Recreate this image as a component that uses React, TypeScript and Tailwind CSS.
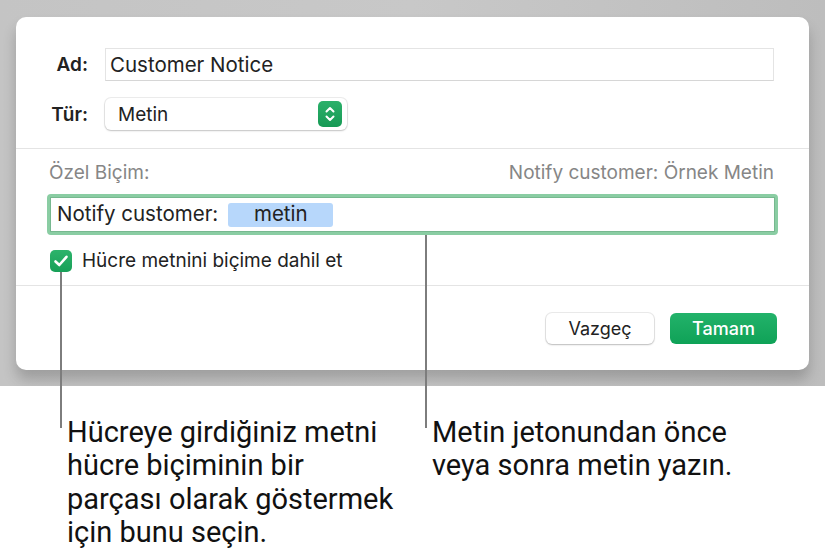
import React from "react";

function Chevrons() {
  return (
    <svg width="12" height="18" viewBox="0 0 12 18" fill="none">
      <path d="M2.5 6.5 L6 3 L9.5 6.5" stroke="white" strokeWidth="2" strokeLinecap="round" strokeLinejoin="round" />
      <path d="M2.5 11.5 L6 15 L9.5 11.5" stroke="white" strokeWidth="2" strokeLinecap="round" strokeLinejoin="round" />
    </svg>
  );
}

function Check() {
  return (
    <svg width="16" height="14" viewBox="0 0 16 14" fill="none">
      <path d="M2.5 7.5 L6.3 11 L13.5 2.8" stroke="white" strokeWidth="2.6" strokeLinecap="round" strokeLinejoin="round" />
    </svg>
  );
}

export default function App() {
  return (
    <div
      className="relative w-[825px] h-[556px] bg-white overflow-hidden text-[#222222]"
      style={{ fontFamily: "Inter, 'Noto Sans', sans-serif" }}
    >
      {/* gray backdrop with dialog */}
      <div className="h-[386px] bg-gradient-to-r from-[#c4c4c4] via-[#c8c8c8] to-[#bdbdbd] pt-[17px] pl-[16px] overflow-hidden">
        <div className="w-[793px] h-[353px] bg-white rounded-[10px] shadow-[0_10px_14px_rgba(0,0,0,0.2)] flex flex-col">
          {/* top section */}
          <div className="pt-[31px] pb-[18px] flex flex-col gap-[17px]">
            <div className="flex items-center">
              <div className="w-[72px] text-right text-[19px] font-semibold pt-[2px]">Ad:</div>
              <div className="ml-[17px] w-[669px] h-[33px] border border-[#e4e4e4] border-b-[#d6d6d6] flex items-center pl-[4px] pt-[2px] text-[20.5px]">
                Customer Notice
              </div>
            </div>
            <div className="flex items-center">
              <div className="w-[72px] text-right text-[19px] font-semibold pt-[3px]">Tür:</div>
              <div className="ml-[17px] w-[242px] h-[32px] rounded-[6px] bg-white shadow-[0_0_0_1px_rgba(0,0,0,0.07),0_1px_2px_rgba(0,0,0,0.18)] flex items-center justify-between pl-[13px] pr-[5px]">
                <span className="text-[19px] pt-[2px]">Metin</span>
                <div className="w-[24px] h-[26px] rounded-[5px] bg-gradient-to-b from-[#2bb06a] to-[#169a55] flex items-center justify-center">
                  <Chevrons />
                </div>
              </div>
            </div>
          </div>
          <div className="h-px bg-[#e4e4e4]" />

          {/* middle section */}
          <div className="px-[31px] pt-[14px] pb-[13px] flex flex-col">
            <div className="flex justify-between items-center pl-[2px] pr-[4px] text-[19px] text-[#868686] leading-[20px]">
              <span>Özel Biçim:</span>
              <span>Notify customer: Örnek Metin</span>
            </div>
            <div className="mt-[11px] w-[731px] h-[41px] rounded-[4px] border-[3px] border-[#8acda3] flex">
              <div className="flex-1 h-full border border-[#77b88f] flex items-center pl-[6px] text-[20.5px]">
                <span>Notify customer:</span>
                <span className="ml-[10px] w-[105px] h-[24px] rounded-[3px] bg-[#b7d7fb] flex items-center justify-center">
                  metin
                </span>
              </div>
            </div>
            <div className="mt-[15px] flex items-center h-[22px] leading-[22px]">
              <div className="ml-[3px] w-[22px] h-[22px] rounded-[5px] bg-gradient-to-b from-[#2cb36b] to-[#17a058] flex items-center justify-center">
                <Check />
              </div>
              <span className="ml-[10px] text-[19px]">Hücre metnini biçime dahil et</span>
            </div>
          </div>
          <div className="h-px bg-[#e4e4e4]" />

          {/* footer */}
          <div className="flex justify-end gap-[16px] pt-[27px] pr-[32px]">
            <div className="w-[108px] h-[31px] rounded-[6px] bg-white shadow-[0_0_0_1px_rgba(0,0,0,0.08),0_1px_2px_rgba(0,0,0,0.2)] flex items-center justify-center text-[18px]">
              Vazgeç
            </div>
            <div className="w-[107px] h-[31px] rounded-[6px] bg-gradient-to-b from-[#22b26a] to-[#0ea257] flex items-center justify-center text-[18px] font-medium text-white">
              Tamam
            </div>
          </div>
        </div>
      </div>

      {/* callout texts */}
      <div
        className="flex pt-[30px] text-[29px] leading-[33.3px] text-[#111111]"
        style={{ fontFamily: "Roboto, 'Liberation Sans', sans-serif" }}
      >
        <div className="ml-[67px] w-[350px]">
          Hücreye girdiğiniz metni
          <br />
          hücre biçiminin bir
          <br />
          parçası olarak göstermek
          <br />
          için bunu seçin.
        </div>
        <div className="ml-[15px]">
          Metin jetonundan önce
          <br />
          veya sonra metin yazın.
        </div>
      </div>

      {/* callout leader lines */}
      <div className="absolute left-[60px] top-[272px] w-[2px] h-[156px] bg-[#7d7d7d]" />
      <div className="absolute left-[425px] top-[235px] w-[2px] h-[193px] bg-[#7d7d7d]" />
    </div>
  );
}
